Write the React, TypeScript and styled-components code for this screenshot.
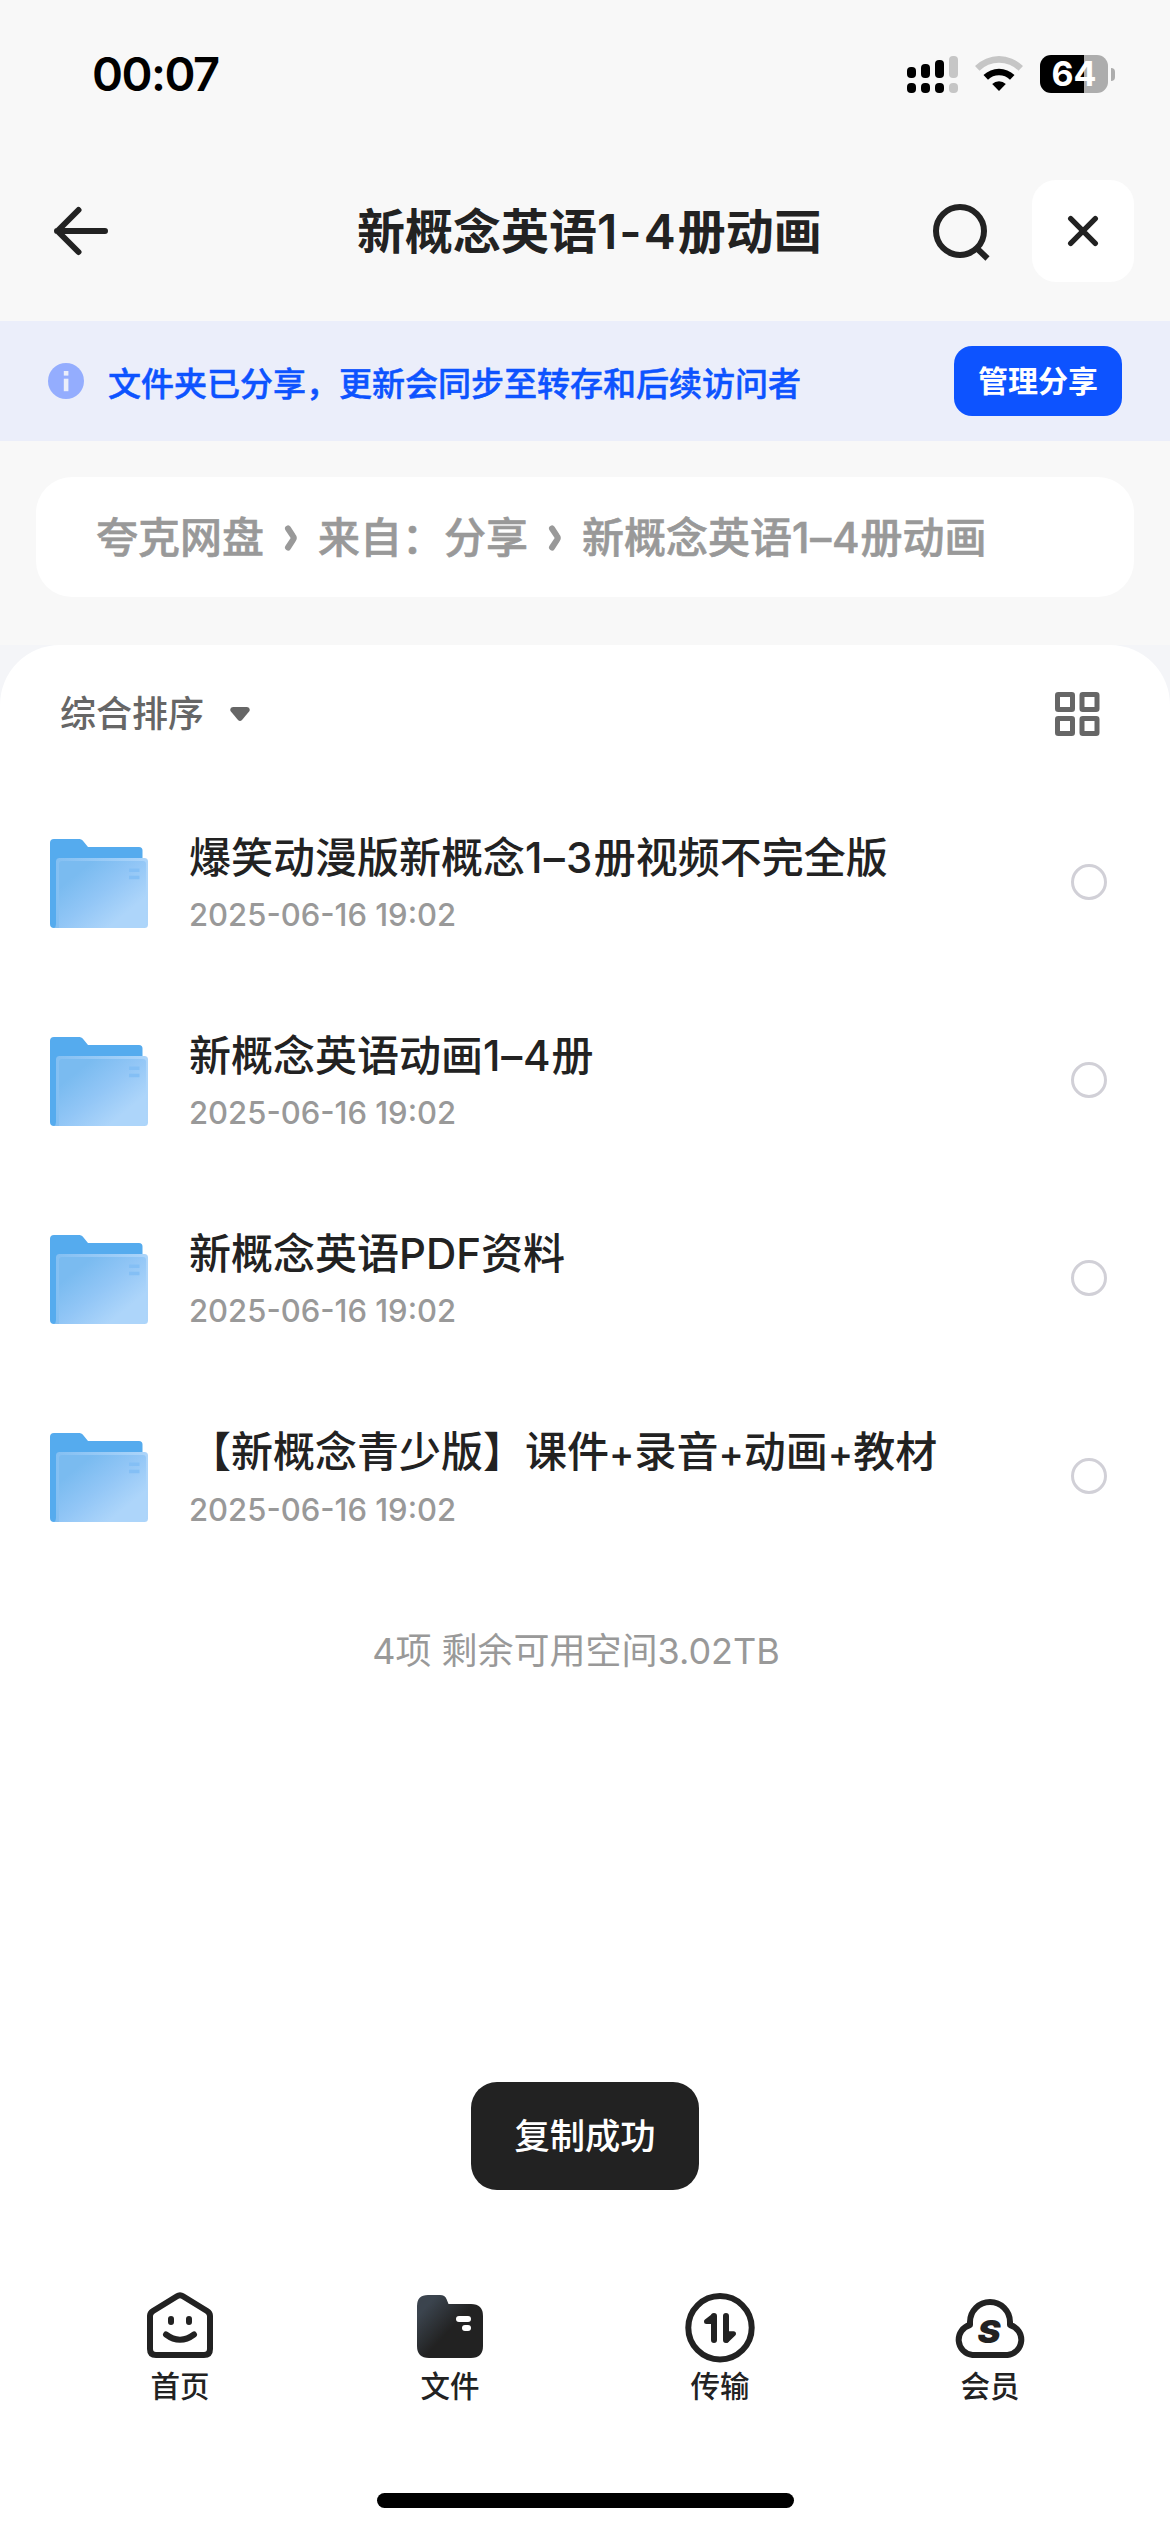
import React from "react";
import styled, { createGlobalStyle } from "styled-components";

const GlobalStyle = createGlobalStyle`
  * { box-sizing: border-box; }
  body {
    margin: 0;
    background: #f8f8f8;
    font-family: Inter, "Noto Sans CJK SC", sans-serif;
    color: #222;
  }
`;

const Screen = styled.div`
  width: 1170px;
  height: 2532px;
  display: flex;
  flex-direction: column;
  overflow: hidden;
  white-space: nowrap;
  background: #f8f8f8;
`;

const StatusBar = styled.div`
  height: 141px;
  padding: 7px 55px 0 92px;
  display: flex;
  align-items: center;
  justify-content: space-between;
`;

const Clock = styled.div`
  font-size: 47px;
  line-height: 60px;
  font-weight: 600;
  letter-spacing: -1.5px;
  color: #000;
`;

const StatusIcons = styled.div`
  display: flex;
  align-items: center;
  gap: 17px;
`;

const BatteryWrap = styled.div`
  display: flex;
  align-items: center;
  gap: 3px;
`;

const Battery = styled.div`
  width: 68px;
  height: 38px;
  border-radius: 11px;
  display: flex;
  align-items: center;
  justify-content: center;
  background: linear-gradient(90deg, #000 0 44px, #adadad 44px);
  color: #fff;
  font-size: 34px;
  line-height: 38px;
  font-weight: 700;
`;

const BatteryNub = styled.div`
  width: 4px;
  height: 13px;
  border-radius: 0 4px 4px 0;
  background: #adadad;
`;

const Header = styled.header`
  height: 180px;
  padding: 0 36px 0 48px;
  display: grid;
  grid-template-columns: 260px 1fr 60px 102px;
  align-items: center;
`;

const Title = styled.h1`
  margin: 0;
  padding: 2px 0 0 49px;
  font-size: 48px;
  line-height: 64px;
  font-weight: 600;
`;

const CloseButton = styled.button`
  width: 102px;
  height: 102px;
  padding: 0;
  border: 0;
  border-radius: 24px;
  background: #fff;
  display: flex;
  align-items: center;
  justify-content: center;
`;

const IconButton = styled.button`
  padding: 0;
  border: 0;
  background: none;
  display: flex;
`;

const HeaderTools = styled.div`
  grid-column: 3 / 5;
  justify-self: end;
  display: flex;
  align-items: center;
  gap: 42px;
`;

const Banner = styled.div`
  height: 120px;
  padding: 0 48px;
  display: flex;
  align-items: center;
  background: #ebeefa;
`;

const BannerText = styled.div`
  flex: 1;
  padding: 6px 0 0 24px;
  font-size: 33px;
  line-height: 44px;
  font-weight: 500;
  -webkit-text-stroke: 0.5px currentColor;
  color: #0d53ff;
`;

const ManageButton = styled.button`
  width: 168px;
  height: 70px;
  padding: 0;
  border: 0;
  border-radius: 18px;
  background: #0d53ff;
  color: #fff;
  font: 700 30px/70px Inter, "Noto Sans CJK SC", sans-serif;
`;

const Breadcrumb = styled.nav`
  height: 120px;
  margin: 36px 36px 48px;
  padding: 2px 60px 0;
  border-radius: 36px;
  background: #fff;
  display: flex;
  align-items: center;
  color: #999;
  font-size: 42px;
  line-height: 56px;
  font-weight: 500;
  -webkit-text-stroke: 0.6px currentColor;
`;

const Separator = styled.svg`
  width: 54px;
  height: 30px;
`;

const PanelBackdrop = styled.div`
  flex: 1;
  display: flex;
  background: linear-gradient(#f4f5f8 0 80px, #fff 80px);
`;

const Panel = styled.main`
  flex: 1;
  display: flex;
  flex-direction: column;
  border-radius: 60px 60px 0 0;
  background: #fff;
`;

const SortBar = styled.div`
  height: 138px;
  padding: 0 70px 0 60px;
  display: flex;
  align-items: center;
  justify-content: space-between;
`;

const SortButton = styled.button`
  padding: 0;
  border: 0;
  background: none;
  display: flex;
  align-items: center;
  gap: 26px;
  color: #666;
  font: 500 36px/48px Inter, "Noto Sans CJK SC", sans-serif;
`;

const FileList = styled.ul`
  margin: 0;
  padding: 0;
  list-style: none;
`;

const FileRow = styled.li`
  height: 198px;
  padding: 0 63px 0 49px;
  display: flex;
  align-items: center;
`;

const FileInfo = styled.div`
  flex: 1;
  padding: 6px 0 0 40px;
  display: flex;
  flex-direction: column;
`;

const FileName = styled.div`
  font-size: 42px;
  line-height: 60px;
  font-weight: 500;
`;

const Latin = styled.span<{ $track: number }>`
  letter-spacing: ${(p) => p.$track}px;
`;

const Plus = styled.span`
  font-size: 38px;
`;

const FileDate = styled.div`
  font-size: 31px;
  line-height: 54px;
  font-weight: 500;
  color: #999;
`;

const FolderArt = styled.svg`
  width: 100px;
  height: 92px;
  margin-top: 3px;
`;

const Radio = styled.span`
  width: 36px;
  height: 36px;
  border: 3px solid #d1d0d7;
  border-radius: 50%;
`;

const Summary = styled.div`
  padding: 52px 18px 0 0;
  text-align: center;
  font-size: 36px;
  line-height: 48px;
  color: #999;
`;

const ToastArea = styled.div`
  flex: 1;
  display: flex;
  justify-content: center;
  align-items: flex-end;
`;

const Toast = styled.div`
  width: 228px;
  height: 108px;
  border-radius: 26px;
  background: #222;
  color: #fff;
  text-align: center;
  font-size: 35.3px;
  font-weight: 500;
  line-height: 110px;
`;

const TabBar = styled.nav`
  height: 342px;
  padding: 99px 45px 0;
  display: grid;
  grid-template-columns: repeat(4, 1fr);
  grid-template-rows: 204px 15px;
`;

const Tab = styled.div`
  display: flex;
  flex-direction: column;
  align-items: center;
  gap: 5px;
  font-size: 29.5px;
  line-height: 40px;
  font-weight: 500;
`;

const TabIcon = styled.div`
  height: 72px;
  width: 72px;
`;

const HomeIndicator = styled.div`
  grid-column: 1 / -1;
  justify-self: center;
  width: 417px;
  height: 15px;
  border-radius: 8px;
  background: #000;
`;

const SignalIcon = () => (
  <svg width="51" height="38" viewBox="0 0 51 38">
    {[12, 9, 5, 1].map((top, i) => (
      <g key={i} fill={i === 3 ? "#c6c6c6" : "#000"}>
        <rect x={i * 14} y={top} width="9" height={23 - top} rx="4" />
        <rect x={i * 14} y="28" width="9" height="10" rx="4" />
      </g>
    ))}
  </svg>
);

const WifiIcon = () => (
  <svg width="48" height="38" viewBox="0 0 48 38">
    <path d="M0 11A34 34 0 0 1 48 11L43.5 15.8A27.5 27.5 0 0 0 4.500 15.800Z" fill="#c6c6c6" />
    <path d="M8.500 20A22.500 22.500 0 0 1 39.500 20L35 24.700A16 16 0 0 0 13 24.700Z" fill="#000" />
    <path d="M17.200 29A10 10 0 0 1 30.800 29L24 36Z" fill="#000" />
  </svg>
);

const BackIcon = () => (
  <svg width="66" height="66" viewBox="0 0 66 66" fill="none" stroke="#222" strokeWidth="6" strokeLinecap="round" strokeLinejoin="round">
    <path d="M57 33H9M30.500 12L9.500 33L30.500 54" />
  </svg>
);

const SearchIcon = () => (
  <svg width="60" height="60" viewBox="0 0 60 60" fill="none" stroke="#222" strokeWidth="6">
    <circle cx="30" cy="30" r="24" />
    <path d="M46.500 47L57.500 57.500" />
  </svg>
);

const CloseIcon = () => (
  <svg width="36" height="36" viewBox="0 0 36 36" stroke="#222" strokeWidth="5.400" strokeLinecap="round">
    <path d="M5.700 5.700L30.300 30.300M30.300 5.700L5.700 30.300" />
  </svg>
);

const InfoIcon = () => (
  <svg width="36" height="36" viewBox="0 0 36 36">
    <circle cx="18" cy="18" r="18" fill="#94adfe" />
    <rect x="15.800" y="8" width="4.600" height="4.600" fill="#ebeefa" />
    <rect x="15.800" y="15.700" width="4.600" height="12.500" fill="#ebeefa" />
  </svg>
);

const ChevronIcon = () => (
  <Separator viewBox="0 0 54 30" fill="none" stroke="#999" strokeWidth="6" strokeLinecap="round" strokeLinejoin="round">
    <path d="M24 5.500L29 13.200Q30.500 15 29 16.800L24 24.500" />
  </Separator>
);

const CaretIcon = () => (
  <svg width="20" height="16" viewBox="0 0 20 16">
    <path d="M3 1H17Q20.500 1.500 19.500 5L12 14Q10 16 8 14L0.500 5Q-0.500 1.500 3 1Z" fill="#666" />
  </svg>
);

const GridIcon = () => (
  <svg width="46" height="46" viewBox="0 0 46 46" fill="none" stroke="#666" strokeWidth="5">
    {[3.5, 28].map((x) =>
      [3.5, 27.5].map((y) => <rect key={`${x}-${y}`} x={x} y={y} width="15" height="15" rx="0.800" />)
    )}
  </svg>
);

const FolderIcon = () => (
  <FolderArt viewBox="0 0 100 92">
    <defs>
      <linearGradient id="folderFront" x1="0.050" y1="0.100" x2="0.900" y2="0.900">
        <stop offset="0.150" stopColor="#7abbf0" />
        <stop offset="0.500" stopColor="#92c6f6" />
        <stop offset="0.850" stopColor="#add5fa" />
      </linearGradient>
      <linearGradient id="folderEdge" x1="0" y1="0" x2="1" y2="0">
        <stop offset="0" stopColor="#83bff2" />
        <stop offset="1" stopColor="#add5fa" />
      </linearGradient>
    </defs>
    <path d="M1 5Q1 1 5 1H30.500Q32.500 1 33.700 2.600L39 9H90Q93.500 9 93.500 12.500V60H20V90H5Q1 90 1 86Z" fill="#55abee" />
    <path d="M7 23.500Q7 20 10.500 20H95.500Q99 20 99 23.500V86.500Q99 90 95.500 90H5Q7 89 7 86Z" fill="url(#folderEdge)" />
    <path d="M10 26Q10 23 13 23H94Q97 23 97 26V85Q97 90 93 90H10Z" fill="url(#folderFront)" />
    <rect x="80" y="30.500" width="10.500" height="3.500" fill="#84bff5" />
    <rect x="80" y="37.700" width="10.500" height="3.500" fill="#84bff5" />
  </FolderArt>
);

const HomeIcon = () => (
  <svg width="72" height="72" viewBox="0 0 72 72" fill="none" stroke="#222" strokeWidth="6" strokeLinecap="round" strokeLinejoin="round">
    <path d="M6 60V27Q6 24 9 22L33 7.300Q36 5.200 39 7.300L63 22Q66 24 66 27V60Q66 66 60 66H12Q6 66 6 60Z" />
    <path d="M27 30V33M45 30V33M22 45.500Q36 56 50 45.500" />
  </svg>
);

const FilesIcon = () => (
  <svg width="72" height="72" viewBox="0 0 72 72">
    <defs>
      <linearGradient id="filesFill" x1="0.050" y1="0.150" x2="0.500" y2="0.550">
        <stop offset="0.150" stopColor="#3b444e" />
        <stop offset="1" stopColor="#222" />
      </linearGradient>
    </defs>
    <path d="M3 17Q3 6 14 6H26Q31 6 32.500 10L34.500 15H57Q69 15 69 27V57Q69 69 57 69H15Q3 69 3 57Z" fill="url(#filesFill)" />
    <rect x="42" y="27" width="15" height="6" rx="3" fill="#fff" />
    <rect x="48" y="36" width="9" height="6" rx="3" fill="#fff" />
  </svg>
);

const TransferIcon = () => (
  <svg width="72" height="76" viewBox="0 0 72 76" fill="none" stroke="#222" strokeLinecap="round" strokeLinejoin="round">
    <circle cx="36" cy="38.700" r="31.700" strokeWidth="6" />
    <path d="M30 27V51M42 27V51" strokeWidth="6" />
    <path d="M22.500 32.500L29 27.500V32.500Z" strokeWidth="5" fill="#222" />
    <path d="M49.500 44.800L43 51V44.800Z" strokeWidth="5" fill="#222" />
  </svg>
);

const MemberIcon = () => (
  <svg width="72" height="72" viewBox="0 0 72 72">
    <path
      d="M16 36V33A20 20 0 0 1 56 33V36A15.300 15.300 0 0 1 53.500 66H18.500A15.300 15.300 0 0 1 16 36Z"
      fill="none" stroke="#222" strokeWidth="6" strokeLinejoin="round"
    />
    <text transform="translate(35 53.600) scale(1.080 1)" textAnchor="middle" fontFamily="Inter" fontWeight="900" fontStyle="italic" fontSize="32" fill="#222">S</text>
  </svg>
);

const crumbs: React.ReactNode[] = [
  "夸克网盘",
  "来自：分享",
  <>新概念英语<Latin $track={0.8}>1–4</Latin>册动画</>,
];

const files: { name: React.ReactNode; date: string }[] = [
  { name: <>爆笑动漫版新概念<Latin $track={1.3}>1–3</Latin>册视频不完全版</>, date: "2025-06-16 19:02" },
  { name: <>新概念英语动画<Latin $track={0.8}>1–4</Latin>册</>, date: "2025-06-16 19:02" },
  { name: <>新概念英语PDF资料</>, date: "2025-06-16 19:02" },
  {
    name: <>【新概念青少版】课件<Plus>+</Plus>录音<Plus>+</Plus>动画<Plus>+</Plus>教材</>,
    date: "2025-06-16 19:02",
  },
];

const tabs = [
  { label: "首页", Icon: HomeIcon },
  { label: "文件", Icon: FilesIcon },
  { label: "传输", Icon: TransferIcon },
  { label: "会员", Icon: MemberIcon },
];

export default function App() {
  return (
    <>
      <GlobalStyle />
      <Screen>
        <StatusBar>
          <Clock>00:07</Clock>
          <StatusIcons>
            <SignalIcon />
            <WifiIcon />
            <BatteryWrap>
              <Battery>64</Battery>
              <BatteryNub />
            </BatteryWrap>
          </StatusIcons>
        </StatusBar>
        <Header>
          <IconButton aria-label="返回"><BackIcon /></IconButton>
          <Title>新概念英语<Latin $track={2}>1-4</Latin>册动画</Title>
          <HeaderTools>
            <IconButton aria-label="搜索"><SearchIcon /></IconButton>
            <CloseButton aria-label="关闭"><CloseIcon /></CloseButton>
          </HeaderTools>
        </Header>
        <Banner>
          <InfoIcon />
          <BannerText>文件夹已分享，更新会同步至转存和后续访问者</BannerText>
          <ManageButton>管理分享</ManageButton>
        </Banner>
        <Breadcrumb>
          {crumbs.map((crumb, i) => (
            <React.Fragment key={i}>
              {i > 0 && <ChevronIcon />}
              <span>{crumb}</span>
            </React.Fragment>
          ))}
        </Breadcrumb>
        <PanelBackdrop>
          <Panel>
            <SortBar>
              <SortButton>综合排序<CaretIcon /></SortButton>
              <GridIcon />
            </SortBar>
            <FileList>
              {files.map((file, i) => (
                <FileRow key={i}>
                  <FolderIcon />
                  <FileInfo>
                    <FileName>{file.name}</FileName>
                    <FileDate>{file.date}</FileDate>
                  </FileInfo>
                  <Radio />
                </FileRow>
              ))}
            </FileList>
            <Summary>4项 剩余可用空间3.02TB</Summary>
            <ToastArea>
              <Toast>复制成功</Toast>
            </ToastArea>
            <TabBar>
              {tabs.map(({ label, Icon }) => (
                <Tab key={label}>
                  <TabIcon><Icon /></TabIcon>
                  <span>{label}</span>
                </Tab>
              ))}
              <HomeIndicator />
            </TabBar>
          </Panel>
        </PanelBackdrop>
      </Screen>
    </>
  );
}
